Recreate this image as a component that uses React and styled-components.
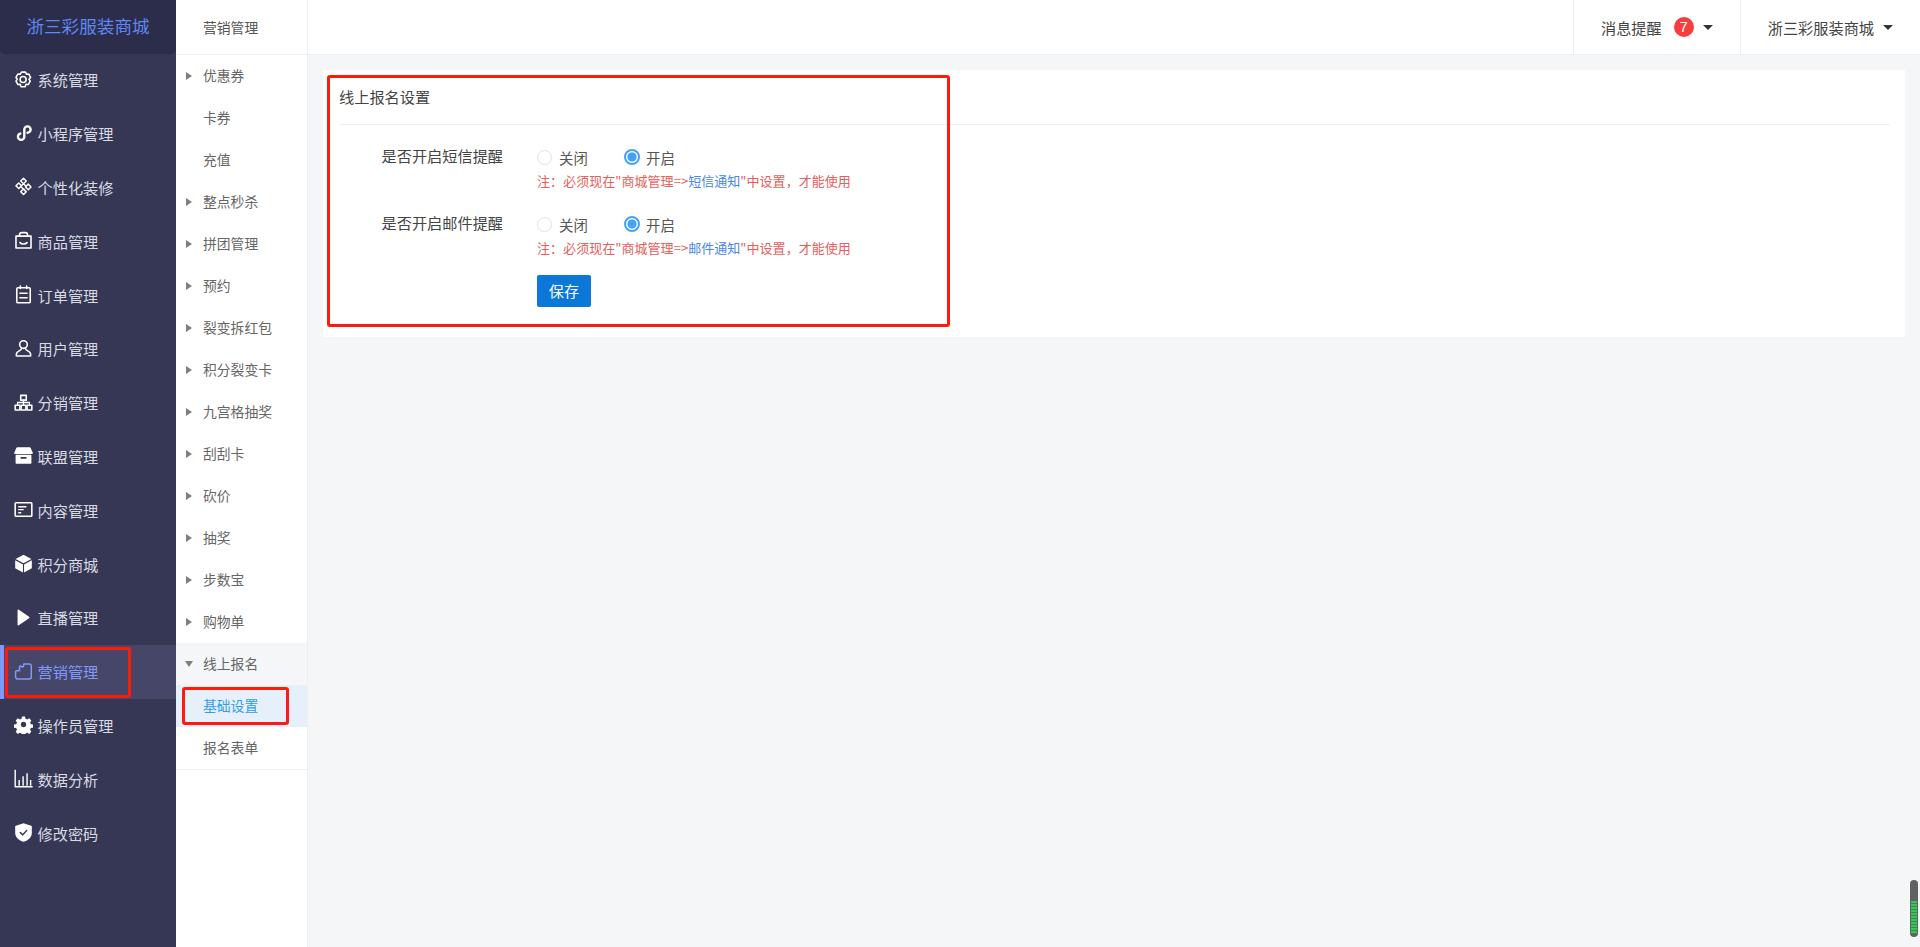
import React from 'react';
import styled, { createGlobalStyle } from 'styled-components';

const Global = createGlobalStyle`
  html, body { margin: 0; padding: 0; height: 100%; overflow: hidden; }
  body { font-family: "Noto Sans CJK SC", "Liberation Sans", sans-serif; background: #f5f6f8; color: #333; }
  #root { height: 100%; }
  * { box-sizing: border-box; }
`;

const Page = styled.div`
  position: relative;
  display: flex;
  width: 1920px;
  height: 947px;
  overflow: hidden;
`;
const Sidebar = styled.aside`
  width: 176px;
  flex: none;
  background: #353755;
  display: flex;
  flex-direction: column;
`;
const Logo = styled.div`
  height: 54px;
  flex: none;
  margin-bottom: -1px;
  position: relative;
  background: #2c2d4a;
  border-radius: 0 0 5px 5px;
  color: #5f86f2;
  font-size: 17.6px;
  line-height: 52px;
  text-align: center;
`;
const NavItem = styled.div`
  height: 53.8px;
  flex: none;
  display: flex;
  align-items: center;
  padding-left: ${p => (p.$active ? '10px' : '14px')};
  padding-bottom: 1px;
  border-left: ${p => (p.$active ? '4px solid #8097fb' : 'none')};
  background: ${p => (p.$active ? '#464768' : 'transparent')};
  color: ${p => (p.$active ? '#8097fb' : '#d9dae2')};
  font-size: 15.2px;
`;
const NavIcon = styled.svg`
  width: 19px;
  height: 19px;
  flex: none;
  margin-right: 4.5px;
  fill: none;
  stroke: currentColor;
  stroke-width: 2;
  stroke-linejoin: round;
  stroke-linecap: round;
  color: ${p => (p.$active ? '#8097fb' : '#ffffff')};
`;
const SubMenu = styled.nav`
  width: 132px;
  flex: none;
  background: #fff;
  border-right: 1px solid #eceef1;
  display: flex;
  flex-direction: column;
`;
const SubHead = styled.div`
  height: 55px;
  flex: none;
  padding-left: 27px;
  border-bottom: 1px solid #eceef1;
  color: #555;
  font-size: 13.8px;
  line-height: 54px;
`;
const SubItem = styled.div`
  height: 42px;
  flex: none;
  display: flex;
  align-items: center;
  padding-left: 27px;
  padding-bottom: 2px;
  position: relative;
  font-size: 13.8px;
  color: ${p => (p.$current ? '#2d9cf0' : '#666')};
  background: ${p => (p.$current ? '#e6f0fb' : p.$open ? '#f5f6f8' : 'transparent')};
`;
const SubRule = styled.div`
  height: 1px;
  background: #eceef1;
`;
const Arrow = styled.i`
  position: absolute;
  left: ${p => (p.$open ? '9px' : '10px')};
  top: ${p => (p.$open ? '18px' : '17px')};
  width: 0;
  height: 0;
  border-style: solid;
  border-color: transparent;
  ${p =>
    p.$open
      ? 'border-width: 6px 4.5px 0 4.5px; border-top-color: #7a7f87;'
      : 'border-width: 4.5px 0 4.5px 6px; border-left-color: #7a7f87;'}
`;
const Content = styled.div`
  flex: 1;
  min-width: 0;
  display: flex;
  flex-direction: column;
`;
const TopBar = styled.header`
  height: 55px;
  flex: none;
  background: #fff;
  border-bottom: 1px solid #eceef1;
  display: flex;
  justify-content: flex-end;
`;
const TopCell = styled.div`
  height: 54px;
  display: flex;
  align-items: center;
  border-left: 1px solid #eceef1;
  padding: 0 ${p => p.$right}px 0 27px;
  font-size: 15.2px;
  color: #444;
`;
const Badge = styled.span`
  width: 20px;
  height: 20px;
  margin-left: 12px;
  border-radius: 50%;
  background: #f83d3d;
  color: #fff;
  font-family: "Liberation Sans", sans-serif;
  font-size: 15px;
  line-height: 20px;
  text-align: center;
`;
const Caret = styled.i`
  width: 0;
  height: 0;
  margin-left: 9px;
  border-style: solid;
  border-color: #333 transparent transparent;
  border-width: 5px 5px 0;
`;
const Main = styled.main`
  padding: 15px 15px 0 15px;
`;
const Card = styled.section`
  background: #fff;
  height: 267px;
  padding: 0 15px 0 16px;
`;
const CardTitle = styled.h2`
  margin: 0;
  height: 55px;
  border-bottom: 1px solid #eceef1;
  font-weight: 400;
  font-size: 15.2px;
  line-height: 52px;
  color: #444;
`;
const Form = styled.div`
  display: grid;
  grid-template-columns: 164px 1fr;
  column-gap: 34px;
  padding-top: 18px;
`;
const Label = styled.div`
  text-align: right;
  font-size: 15.2px;
  line-height: 24px;
  color: #444;
  height: 67px;
`;
const Field = styled.div`
  height: 67px;
`;
const RadioRow = styled.div`
  display: flex;
  height: 28px;
  align-items: center;
`;
const RadioOpt = styled.label`
  display: flex;
  align-items: center;
  width: 87px;
  font-size: 14.4px;
  color: #555;
`;
const RadioDot = styled.span`
  width: ${p => (p.$on ? 16 : 15)}px;
  height: ${p => (p.$on ? 16 : 15)}px;
  margin-right: ${p => (p.$on ? 6 : 7)}px;
  flex: none;
  border-radius: 50%;
  border: ${p => (p.$on ? '2px solid #44a3f5' : '1px solid #dfe1e5')};
  background: ${p => (p.$on ? 'radial-gradient(circle, #44a3f5 0 4.2px, #fff 5px)' : '#fff')};
`;
const Note = styled.div`
  font-size: 13.05px;
  line-height: 20px;
  color: #e4605c;
  white-space: nowrap;
`;
const NoteLink = styled.span`
  color: #4a86e4;
`;
const SaveButton = styled.button`
  grid-column: 2;
  justify-self: start;
  width: 54px;
  height: 32px;
  margin-top: -2px;
  padding: 0 0 2px;
  border: 0;
  border-radius: 2px;
  background: #0b78d9;
  color: #fff;
  font: inherit;
  font-size: 15.2px;
`;
const Mark = styled.div`
  position: absolute;
  left: ${p => p.$x}px;
  top: ${p => p.$y}px;
  width: ${p => p.$w}px;
  height: ${p => p.$h}px;
  border: 3px solid #ff1a0e;
  border-radius: 3px;
  pointer-events: none;
`;
const Meter = styled.div`
  position: absolute;
  left: 1910px;
  top: 880px;
  width: 8px;
  height: 57px;
  border-radius: 4px;
  background: #5f6165;
  padding: 21px 1px 3px;
`;
const MeterFill = styled.div`
  height: 100%;
  background: repeating-linear-gradient(#2fc956 0 2px, #4a7f58 2px 3px);
`;

const icons = {
  gear: <><path d="M9.500 2h5l1.200 2.600 2.800-.3 2.500 4.300L19 11l1.500 2.400-2.500 4.300-2.800-.2L14 20.500h-5l-1.200-3-2.800.2-2.500-4.300L4 11 2.500 8.600 5 4.300l2.800.3z" transform="translate(0 .7)" /><circle cx="11.500" cy="12" r="3.800" /></>,
  mini: <path d="M3.500 16.500a4 4 0 1 0 8 0V7.500a4 4 0 1 1 4 4M3.500 16.500a4 4 0 0 1 3-3.900" strokeWidth="3" transform="translate(1.500 -.5)" />,
  deco: <path d="M12 1.500l3.500 3.500-3.500 3.500L8.500 5zM6 7.500l3.500 3.500L6 14.500 2.500 11zM18 9l3.500 3.500-3.500 3.500-3.500-3.500zM12 15l3.500 3.500L12 22l-3.500-3.500zM8.500 5l7 7M15.500 5l-7 7 6 6" strokeWidth="1.800" />,
  bag: <><path d="M2.500 6.500h19V21.500h-19zM7 6.500V4.500A2.500 2.500 0 0 1 9.500 2h5A2.500 2.500 0 0 1 17 4.500v2" /><path d="M7.500 14.500c1.500 2.500 7.500 2.500 9 0" /></>,
  order: <><rect x="3.500" y="3.500" width="17" height="19" rx="1.500" /><path d="M8 1.200V4.500M16 1.200V4.500M7.500 10.500h9M7.500 16h9" /></>,
  user: <><circle cx="12" cy="7" r="4.800" /><path d="M9.500 12c0 3-6.500 3-6.500 7v2.500h18V19c0-4-6.500-4-6.500-7" /></>,
  tree: <><rect x="8.500" y="3" width="7" height="6" /><rect x="1.500" y="15.500" width="6" height="6" /><rect x="9" y="15.500" width="6" height="6" /><rect x="16.500" y="15.500" width="6" height="6" /><path d="M4.500 15v-3h15v3M12 9v6" strokeWidth="1.600" /></>,
  store: <><path d="M4 2.500h16l2.800 6.500H1.200z" fill="currentColor" /><path d="M3 12h18v9.500H3z" fill="currentColor" /><path d="M9 15h6" stroke="#353755" strokeWidth="2" /></>,
  content: <><rect x="1.500" y="3.500" width="21" height="17" rx="1" /><path d="M6 8.500h9M6 12.200h5.500M6 16h2.500" strokeWidth="1.800" /></>,
  cube: <><path d="M12 .8l10 5.500-10 5.500L2 6.300z" fill="currentColor" stroke="none" /><path d="M1.500 8l9.800 5.300V23.500l-9.800-5.500zM22.500 8l-9.800 5.300V23.500l9.800-5.500z" fill="currentColor" stroke="none" /></>,
  play: <path d="M5.500 3l13 9-13 9z" fill="currentColor" />,
  puzzle: <path d="M2 12.500c0-1 .8-1.500 1.500-1.500H7V6.500C7 5 8.500 4.500 9.500 5.500c1.200 1.200 2.800.6 2.800-1V2.500h7c1.500 0 2.500 1 2.500 2.500v14c0 1.500-1 2.500-2.500 2.500H5c-1.800 0-3-1.200-3-3z" strokeWidth="1.900" />,
  cog: <path d="M10 1.500h4l.6 3 2.300 1 2.600-1.700 2.800 2.800-1.700 2.600 1 2.300 3 .6v4l-3 .6-1 2.300 1.700 2.600-2.800 2.800-2.600-1.700-2.300 1-.6 3h-4l-.6-3-2.300-1-2.600 1.700-2.800-2.800 1.700-2.600-1-2.300-3-.6v-4l3-.6 1-2.300L1.700 6.600l2.800-2.800 2.600 1.700 2.300-1zM12 8.500a3.500 3.500 0 1 0 0 7 3.500 3.500 0 0 0 0-7z" transform="translate(.5 .5) scale(.96)" fill="currentColor" fillRule="evenodd" stroke="none" />,
  chart: <path d="M1.500 1v21.500h22M6.500 21v-7M11.500 21V9M16.500 21V5.500M21 21v-7" strokeWidth="1.800" strokeLinecap="butt" />,
  shield: <><path d="M12 .3l10.500 3.500v8.700c0 5.500-4.500 9.300-10.500 11.200C6 21.800 1.500 18 1.500 12.500V3.800z" fill="currentColor" stroke="none" /><path d="M8 12l3 3 5-5.500" stroke="#353755" strokeWidth="1.800" /></>,
};

const nav = [
  ['gear', '系统管理'], ['mini', '小程序管理'], ['deco', '个性化装修'], ['bag', '商品管理'],
  ['order', '订单管理'], ['user', '用户管理'], ['tree', '分销管理'], ['store', '联盟管理'],
  ['content', '内容管理'], ['cube', '积分商城'], ['play', '直播管理'], ['puzzle', '营销管理'],
  ['cog', '操作员管理'], ['chart', '数据分析'], ['shield', '修改密码'],
];

const sub = [
  ['优惠券', 1], ['卡券', 0], ['充值', 0], ['整点秒杀', 1], ['拼团管理', 1], ['预约', 1], ['裂变拆红包', 1],
  ['积分裂变卡', 1], ['九宫格抽奖', 1], ['刮刮卡', 1], ['砍价', 1], ['抽奖', 1], ['步数宝', 1], ['购物单', 1],
];

function Setting({ label, channel }) {
  return (
    <>
      <Label>{label}</Label>
      <Field>
        <RadioRow>
          <RadioOpt><RadioDot />关闭</RadioOpt>
          <RadioOpt><RadioDot $on />开启</RadioOpt>
        </RadioRow>
        <Note>注：必须现在"商城管理=&gt;<NoteLink>{channel}</NoteLink>"中设置，才能使用</Note>
      </Field>
    </>
  );
}

export default function App() {
  return (
    <Page>
      <Global />
      <Sidebar>
        <Logo>浙三彩服装商城</Logo>
        {nav.map(([icon, text]) => {
          const active = text === '营销管理';
          return (
            <NavItem key={text} $active={active}>
              <NavIcon viewBox="0 0 24 24" $active={active}>{icons[icon]}</NavIcon>
              {text}
            </NavItem>
          );
        })}
      </Sidebar>
      <SubMenu>
        <SubHead>营销管理</SubHead>
        {sub.map(([text, arrow]) => (
          <SubItem key={text}>{arrow ? <Arrow /> : null}{text}</SubItem>
        ))}
        <SubItem $open><Arrow $open />线上报名</SubItem>
        <SubItem $current>基础设置</SubItem>
        <SubItem>报名表单</SubItem>
        <SubRule />
      </SubMenu>
      <Content>
        <TopBar>
          <TopCell $right={27}>
            消息提醒<Badge>7</Badge><Caret />
          </TopCell>
          <TopCell $right={27}>
            浙三彩服装商城<Caret />
          </TopCell>
        </TopBar>
        <Main>
          <Card>
            <CardTitle>线上报名设置</CardTitle>
            <Form>
              <Setting label="是否开启短信提醒" channel="短信通知" />
              <Setting label="是否开启邮件提醒" channel="邮件通知" />
              <SaveButton>保存</SaveButton>
            </Form>
          </Card>
        </Main>
      </Content>
      <Mark $x={327} $y={75} $w={623} $h={252} />
      <Mark $x={5} $y={647} $w={126} $h={51} />
      <Mark $x={182} $y={687} $w={107} $h={38} />
      <Meter><MeterFill /></Meter>
    </Page>
  );
}
